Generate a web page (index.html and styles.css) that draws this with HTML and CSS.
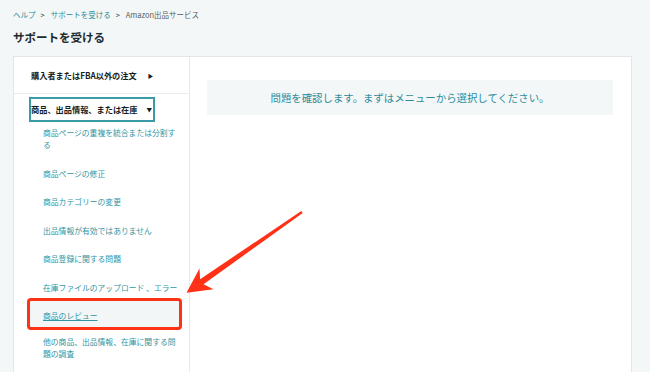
FILE: index.html
```html
<!DOCTYPE html>
<html lang="ja">
<head>
<meta charset="utf-8" />
<title>サポートを受ける</title>
<link rel="stylesheet" href="styles.css">
</head>
<body>

<nav class="crumbs">
	<a href="#">ヘルプ</a><span class="sep">&gt;</span><a href="#">サポートを受ける</a><span class="sep">&gt;</span><span class="here">Amazon出品サービス</span>
</nav>
<h1>サポートを受ける</h1>

<main class="panel">
	<aside class="menu">
		<div class="topic">購入者またはFBA以外の注文<span class="tri">&#9654;</span></div>
		<div class="group">
			<div class="topic open">商品、出品情報、または在庫<span class="tri">&#9660;</span></div>
			<ul class="subs">
				<li><a href="#">商品ページの重複を統合または分割する</a></li>
				<li><a href="#">商品ページの修正</a></li>
				<li><a href="#">商品カテゴリーの変更</a></li>
				<li><a href="#">出品情報が有効ではありません</a></li>
				<li><a href="#">商品登録に関する問題</a></li>
				<li><a href="#">在庫ファイルのアップロード 、エラー</a></li>
				<li class="picked"><a href="#">商品のレビュー</a></li>
				<li><a href="#">他の商品、出品情報、在庫に関する問題の調査</a></li>
			</ul>
		</div>
	</aside>
	<section class="body">
		<p class="hint">問題を確認します。まずはメニューから選択してください。</p>
	</section>
</main>

<!-- annotation arrow drawn on top of the page -->
<svg class="arrow" width="650" height="372" viewBox="0 0 650 372">
	<polygon points="301.3,211 200.1,279.2 199.5,268.5 186.5,292.8 213.5,289.3 203.5,284.2 302.7,213" />
</svg>

</body>
</html>
```

FILE: styles.css
```css
body {
	margin: 0;
	padding: 0 18px 0 13px;
	height: 372px;
	overflow: hidden;
	background: #f3f7f8;
	font-family: "Noto Sans CJK JP", "Lato", sans-serif;
	color: #1f2b30;
	position: relative;
}
a {color: inherit; text-decoration: none;}

/* --------------------------------- */

.crumbs {
	padding-top: 10px;
	font-size: 7.5px;
	line-height: 10px;
	color: #2b8c9b;
}
.crumbs .sep {
	display: inline-block;
	margin: 0 6px 0 5px;
	color: #4a5357;
	font-weight: bold;
	font-size: 7px;
}
.crumbs .here {color: #555d61;}

h1 {
	margin: 9px 0 11px;
	font-size: 11.5px;
	line-height: 16px;
	font-weight: bold;
	color: #1d2a30;
}

/* --------------------------------- */

.panel {
	display: flex;
	height: 340px;
	border: 1px solid #e1e6e8;
	background: #fff;
}

.menu {
	width: 175px;
	flex: none;
	border-right: 1px solid #e6eaeb;
}
.topic {
	font-size: 8.2px;
	font-weight: bold;
	color: #161d20;
	line-height: 12px;
	padding: 12px 0 11px 17px;
	border-bottom: 1px solid #e8ecee;
}
.tri {
	display: inline-block;
	margin-left: 11px;
	font-size: 5.5px;
	vertical-align: 1px;
}
.topic.open {
	width: 122px;
	margin: 3px 0 0 15px;
	padding: 0;
	line-height: 20px;
	border: 2px solid #3a9ba6;
}
.topic.open .tri {margin-left: 9px;}

.subs {
	list-style: none;
	margin: 0;
	padding: 0;
}
.subs li {
	padding: 9px 11px 7.5px 29px;
	font-size: 7.8px;
	line-height: 12px;
	color: #2f95a3;
}
.subs li:first-child {padding-top: 5px;}
.subs li.picked {
	margin: 0 10px 0 16px;
	padding: 9px 0 4.5px 13px;
	background: #f2f6f7;
	outline: 3px solid #ff3116;
	border-radius: 1px;
}
.subs li.picked a {text-decoration: underline;}

/* --------------------------------- */

.body {
	flex: 1;
	padding: 23px 18px 0 17px;
}
.hint {
	margin: 0;
	height: 35px;
	line-height: 35px;
	background: #f3f7f8;
	text-align: center;
	font-size: 10.4px;
	color: #2b8c9b;
}

.arrow {
	position: absolute;
	left: 0;
	top: 0;
	pointer-events: none;
}
.arrow polygon {fill: #ff3116;}
```
